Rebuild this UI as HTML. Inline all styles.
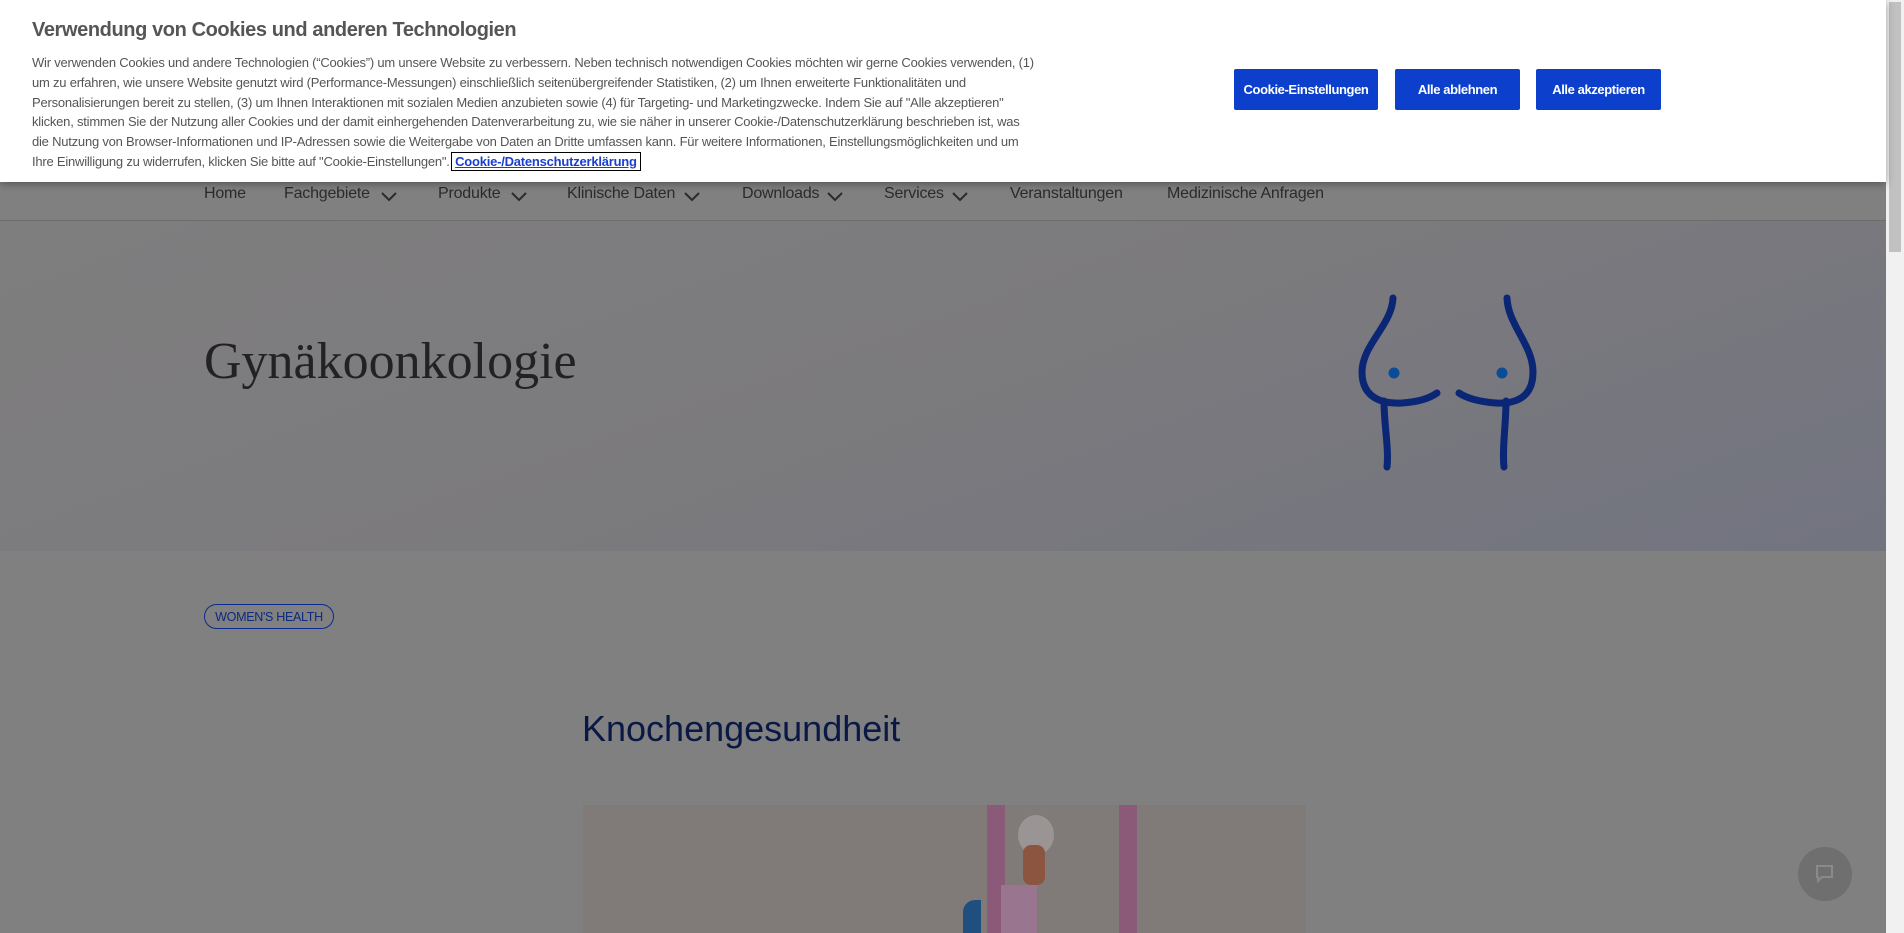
<!DOCTYPE html>
<html><head><meta charset="utf-8"><style>
*{margin:0;padding:0;box-sizing:border-box}
body{width:1904px;height:933px;overflow:hidden;background:#808080;font-family:"Liberation Sans",sans-serif;position:relative}
.banner{position:absolute;left:0;top:0;width:1886px;height:182px;background:#fff;box-shadow:0 2px 8px rgba(0,0,0,.35);z-index:5}
.banner h2{position:absolute;left:32px;top:19px;font-size:20px;font-weight:bold;color:#555;letter-spacing:-0.4px}
.banner p{position:absolute;left:32px;top:53px;font-size:13px;line-height:19.8px;color:#555;letter-spacing:-0.22px;white-space:nowrap}
.banner a{color:#1a3fd0;font-weight:bold;text-decoration:underline;outline:1px solid #000;outline-offset:1px;padding:0 2px}
.btn{position:absolute;top:69px;height:41px;background:#0c3fcc;color:#fff;font-weight:bold;font-size:13px;display:flex;align-items:center;justify-content:center;border-radius:2px;letter-spacing:-0.4px}
.nav{position:absolute;top:182px;left:0;width:1886px;height:39px;border-bottom:1px solid #6d6d6d;background:#808080}
.nav span{position:absolute;top:3px;font-size:16px;color:#2b2b2b;letter-spacing:-0.2px}
.nav svg{position:absolute;top:9px}
.hero{position:absolute;top:221px;left:0;width:1886px;height:330px;background:linear-gradient(160deg,#7f7e7f 0%,#7b7a7d 50%,#727480 100%)}
.hero h1{position:absolute;left:204px;top:111px;font-family:"Liberation Serif",serif;font-weight:normal;font-size:52px;color:#222}
.pill{position:absolute;left:204px;top:604px;width:130px;height:25px;border:1.5px solid #0b2a90;border-radius:13px;color:#0b2a80;font-size:12.5px;display:flex;align-items:center;justify-content:center;letter-spacing:-0.3px}
.k{position:absolute;left:582px;top:708px;font-size:36px;color:#0a1845}
.img{position:absolute;left:583px;top:805px;width:723px;height:128px;background:#807b78;overflow:hidden}
.sb{position:absolute;right:0;top:0;width:18px;height:933px;background:#f1f1f1}
.sb div{position:absolute;left:3px;top:2px;width:12px;height:250px;background:#c1c1c1}
</style></head><body>
<div class="banner">
<h2>Verwendung von Cookies und anderen Technologien</h2>
<p>Wir verwenden Cookies und andere Technologien (“Cookies”) um unsere Website zu verbessern. Neben technisch notwendigen Cookies möchten wir gerne Cookies verwenden, (1)<br>um zu erfahren, wie unsere Website genutzt wird (Performance-Messungen) einschließlich seitenübergreifender Statistiken, (2) um Ihnen erweiterte Funktionalitäten und<br>Personalisierungen bereit zu stellen, (3) um Ihnen Interaktionen mit sozialen Medien anzubieten sowie (4) für Targeting- und Marketingzwecke. Indem Sie auf "Alle akzeptieren"<br>klicken, stimmen Sie der Nutzung aller Cookies und der damit einhergehenden Datenverarbeitung zu, wie sie näher in unserer Cookie-/Datenschutzerklärung beschrieben ist, was<br>die Nutzung von Browser-Informationen und IP-Adressen sowie die Weitergabe von Daten an Dritte umfassen kann. Für weitere Informationen, Einstellungsmöglichkeiten und um<br>Ihre Einwilligung zu widerrufen, klicken Sie bitte auf "Cookie-Einstellungen". <a>Cookie-/Datenschutzerklärung</a></p>
<div class="btn" style="left:1234px;width:144px">Cookie-Einstellungen</div>
<div class="btn" style="left:1395px;width:125px">Alle ablehnen</div>
<div class="btn" style="left:1536px;width:125px">Alle akzeptieren</div>
</div>
<div class="nav">
<span style="left:204px">Home</span>
<span style="left:284px">Fachgebiete</span><svg style="left:380px" width="18" height="12"><path d="M2 2 L9 9 L16 2" fill="none" stroke="#2b2b2b" stroke-width="2"/></svg>
<span style="left:438px">Produkte</span><svg style="left:510px" width="18" height="12"><path d="M2 2 L9 9 L16 2" fill="none" stroke="#2b2b2b" stroke-width="2"/></svg>
<span style="left:567px">Klinische Daten</span><svg style="left:683px" width="18" height="12"><path d="M2 2 L9 9 L16 2" fill="none" stroke="#2b2b2b" stroke-width="2"/></svg>
<span style="left:742px">Downloads</span><svg style="left:826px" width="18" height="12"><path d="M2 2 L9 9 L16 2" fill="none" stroke="#2b2b2b" stroke-width="2"/></svg>
<span style="left:884px">Services</span><svg style="left:951px" width="18" height="12"><path d="M2 2 L9 9 L16 2" fill="none" stroke="#2b2b2b" stroke-width="2"/></svg>
<span style="left:1010px">Veranstaltungen</span>
<span style="left:1167px">Medizinische Anfragen</span>
</div>
<div class="hero"><h1>Gynäkoonkologie</h1></div>
<svg style="position:absolute;left:0;top:0" width="1904" height="933">
<g fill="none" stroke="#0a2675" stroke-width="7" stroke-linecap="round">
<path d="M1393 298 C1392 325 1362 345 1362 372 C1362 398 1382 404 1402 403 C1418 402 1430 398 1437 393"/>
<path d="M1507 298 C1508 325 1533 345 1533 372 C1533 398 1515 404 1496 403 C1480 402 1466 398 1459 393"/>
<path d="M1384 401 C1384 425 1389 448 1387 467"/>
<path d="M1506 401 C1506 425 1502 448 1504 467"/>
</g>
<circle cx="1394" cy="373" r="5.5" fill="#0b4c98"/><circle cx="1502" cy="373" r="5.5" fill="#0b4c98"/>
</svg>
<div class="pill">WOMEN'S HEALTH</div>
<div class="k">Knochengesundheit</div>
<div class="img">
<div style="position:absolute;left:404px;top:0;width:18px;height:128px;background:#8a5a78"></div>
<div style="position:absolute;left:536px;top:0;width:18px;height:128px;background:#8a5a78"></div>
<div style="position:absolute;left:435px;top:10px;width:36px;height:40px;border-radius:50%;background:#9a9594"></div>
<div style="position:absolute;left:440px;top:40px;width:22px;height:40px;background:#8c5540;border-radius:8px"></div>
<div style="position:absolute;left:418px;top:80px;width:36px;height:48px;background:#9a7590"></div>
<div style="position:absolute;left:380px;top:95px;width:18px;height:33px;background:#1f4f7f;border-radius:12px 0 0 0"></div>
</div>
<div style="position:absolute;left:1798px;top:847px;width:54px;height:54px;border-radius:50%;background:#6f6f6f"></div>
<svg style="position:absolute;left:1813px;top:862px" width="24" height="24"><path d="M4 4 H19 V15 H9 L5 19 V15 H4 Z" fill="none" stroke="#8a8a8a" stroke-width="2"/></svg>
<div class="sb"><div></div></div>
</body></html>
